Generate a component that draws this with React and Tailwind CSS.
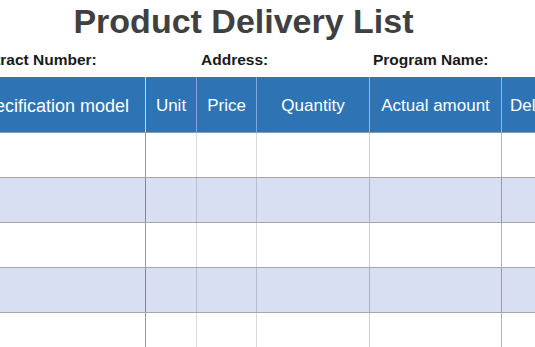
export default function App() {
  const cols = [
    { label: "Specification model", w: "w-[187px]", hb: "border-[#c3d5ea]", bb: "border-black/40", pad: "justify-end pr-[16px] text-[18px]" },
    { label: "Unit", w: "w-[51px]", hb: "border-[#7ea6d6]", bb: "border-black/15", pad: "justify-center text-[17px]" },
    { label: "Price", w: "w-[60px]", hb: "border-[#7ea6d6]", bb: "border-black/15", pad: "justify-center text-[17px]" },
    { label: "Quantity", w: "w-[113px]", hb: "border-[#9bb6d8]", bb: "border-black/20", pad: "justify-center text-[17px]" },
    { label: "Actual amount", w: "w-[132px]", hb: "border-[#9bb6d8]", bb: "border-black/30", pad: "justify-center text-[17px]" },
    { label: "Delivery date", w: "w-[140px]", hb: "border-[#9bb6d8]", bb: "border-black/30", pad: "pl-[8px] text-[17px]" },
  ];
  const rows = [false, true, false, true, false];
  return (
    <div
      className="w-[535px] h-[347px] overflow-hidden bg-white"
      style={{ fontFamily: '"Liberation Sans", Arial, sans-serif' }}
    >
      <div className="w-[487px] h-[40px] text-center text-[34px] leading-[40px] font-bold text-[#404040] pt-[1px]">
        Product Delivery List
      </div>
      <div className="h-[37px] pt-[10px] flex text-[15.5px] leading-[20px] font-bold text-[#1a1a1a] whitespace-nowrap">
        <div className="ml-[-35px] w-[236px] shrink-0">Contract Number:</div>
        <div className="w-[172px] shrink-0">Address:</div>
        <div className="shrink-0">Program Name:</div>
      </div>
      <div className="ml-[-41px] w-[700px]">
        <div className="flex h-[56px] bg-[#2e74b5] border-b border-[#8f9bab]">
          {cols.map((c, i) => (
            <div
              key={i}
              className={`${c.w} shrink-0 border-r ${c.hb} flex items-center pt-[3px] text-white whitespace-nowrap ${c.pad}`}
            >
              {c.label}
            </div>
          ))}
        </div>
        {rows.map((alt, r) => (
          <div
            key={r}
            className={`flex h-[45px] border-b border-[#a6a6a6] ${alt ? "bg-[#d9dff2]" : "bg-white"}`}
          >
            {cols.map((c, i) => (
              <div key={i} className={`${c.w} shrink-0 border-r ${c.bb}`} />
            ))}
          </div>
        ))}
      </div>
    </div>
  );
}
